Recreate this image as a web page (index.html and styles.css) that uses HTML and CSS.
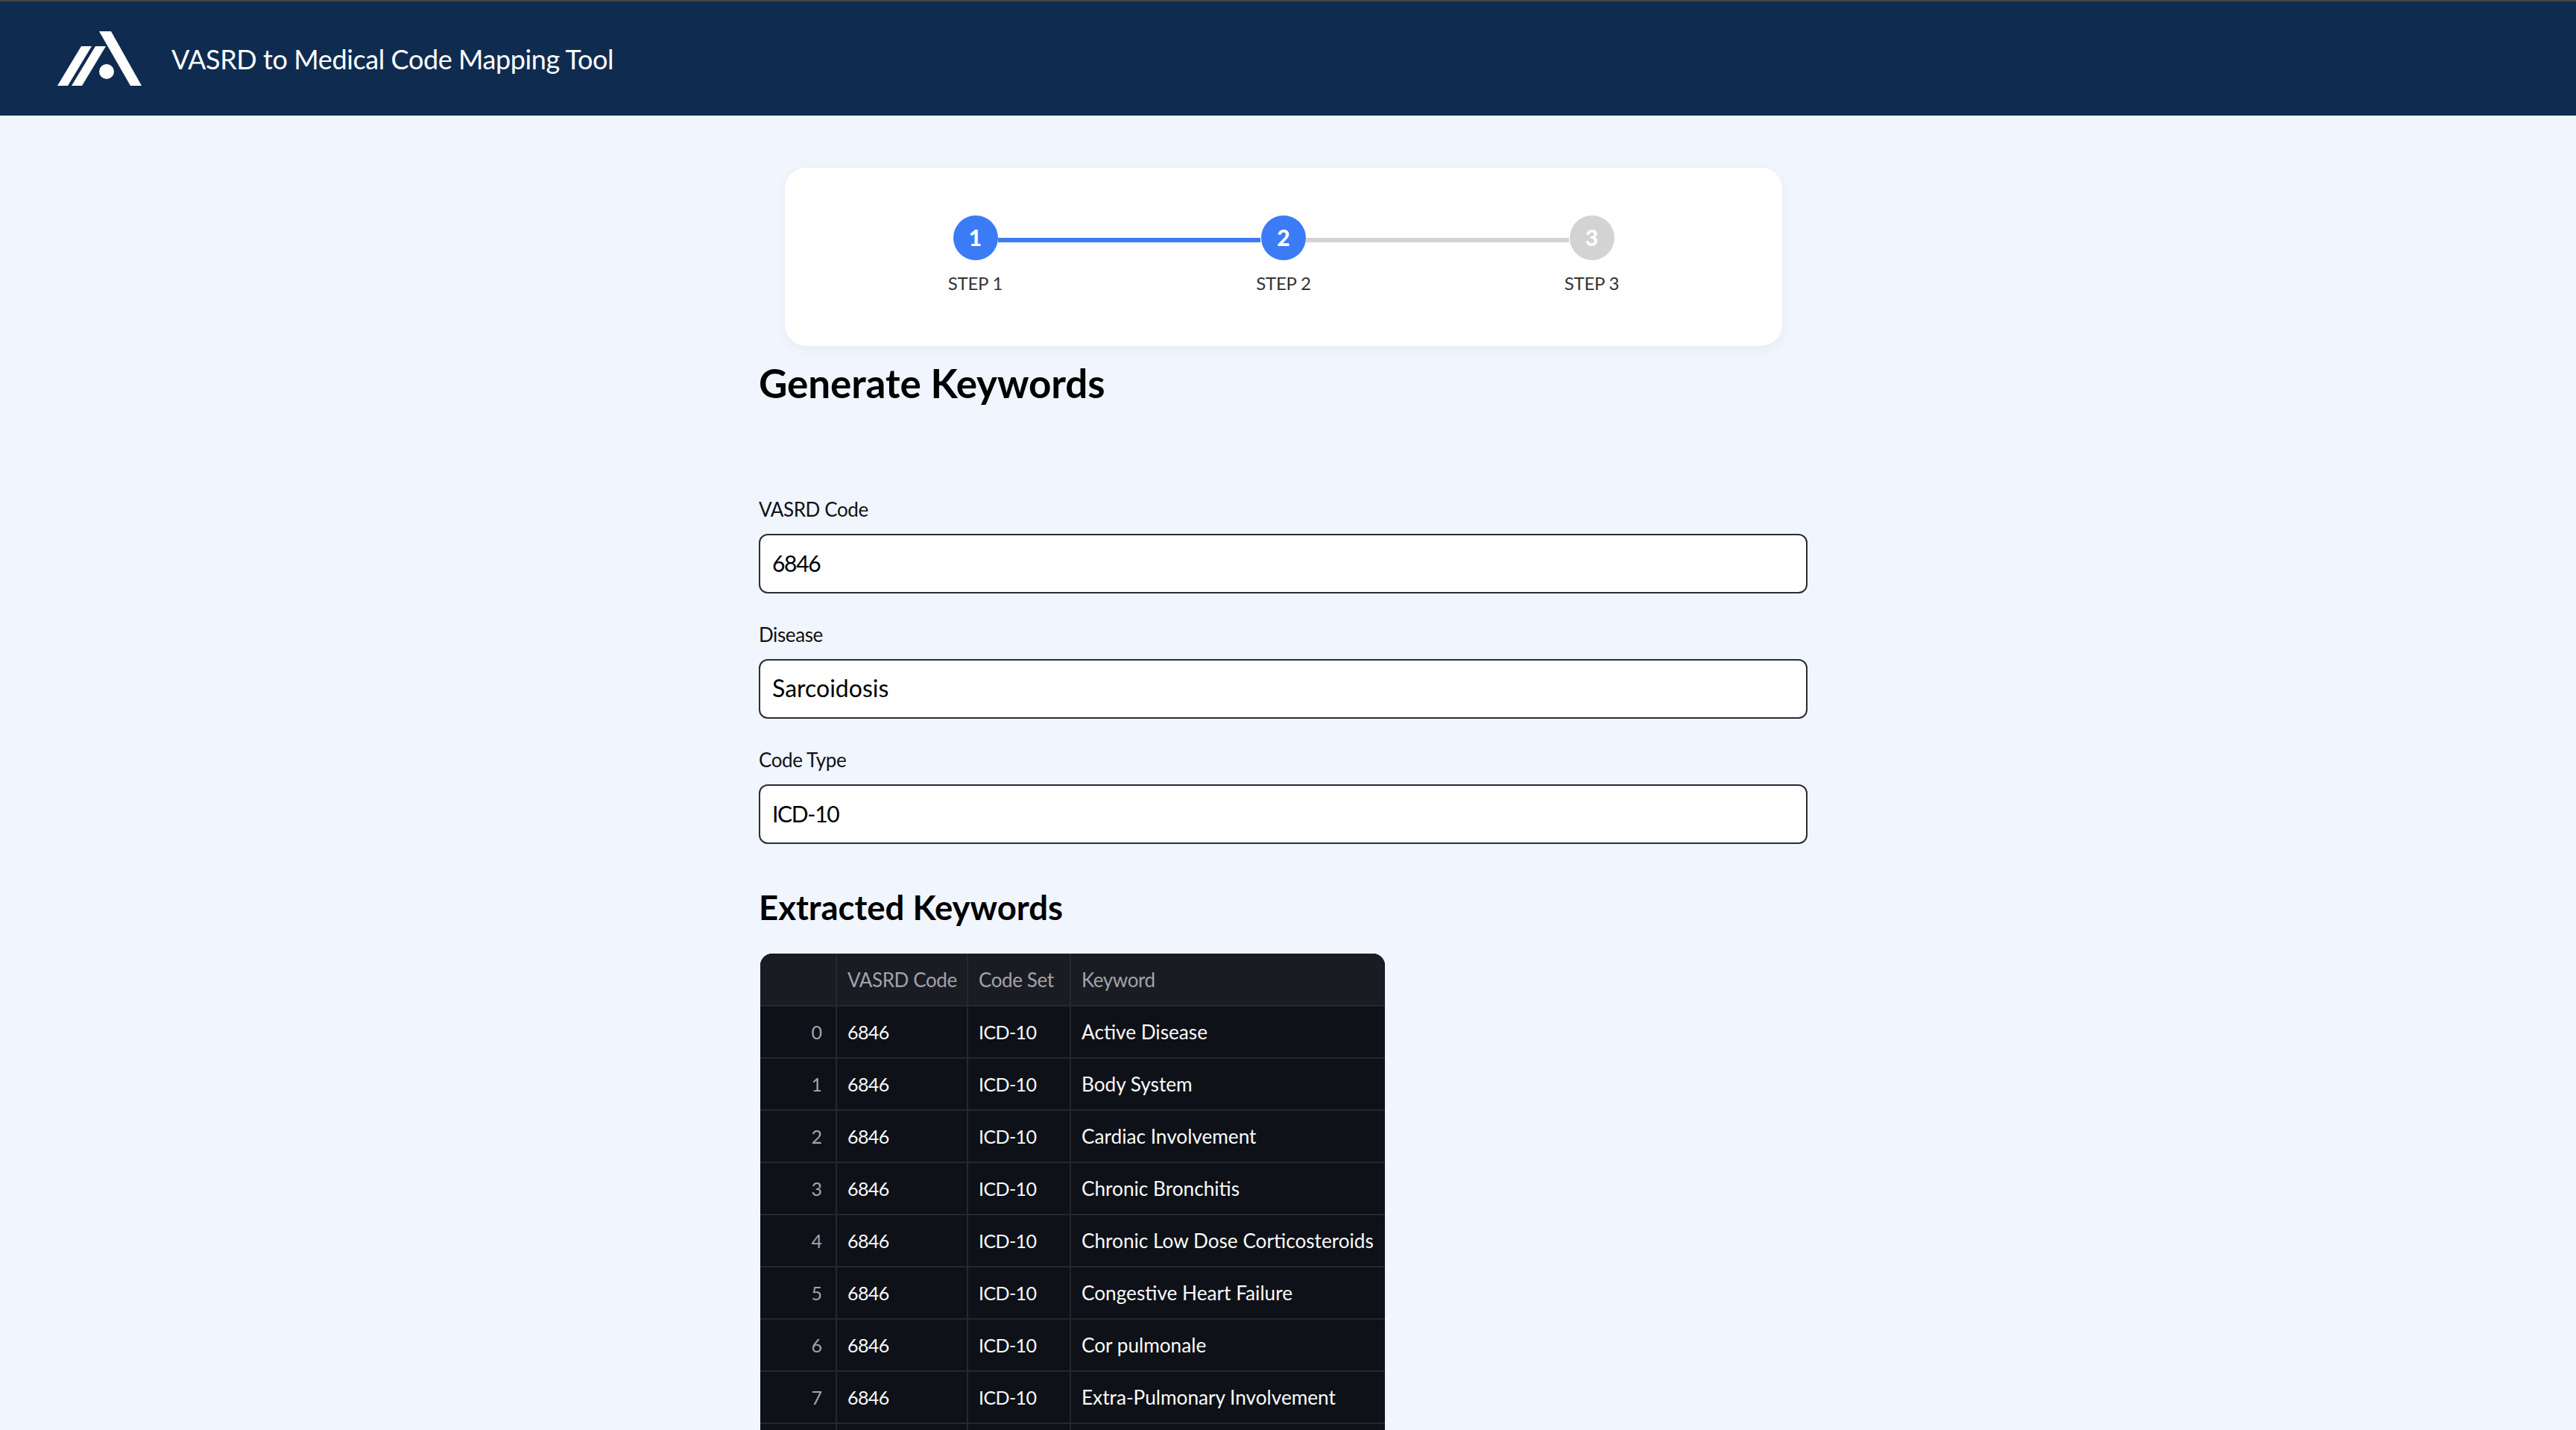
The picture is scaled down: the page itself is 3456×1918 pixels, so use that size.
FILE: index.html
```html
<!DOCTYPE html>
<html>
<head>
  <title>VASRD to Medical Code Mapping Tool</title>
  <link rel="stylesheet" href="styles.css">
</head>
<body>

<header class="topbar">
  <svg class="logo" viewBox="0 0 113 73" width="113" height="73">
    <polygon points="56,0 72,0 113,73 98,73" fill="#fff"/>
    <polygon points="32,20 46,20 14,73 0,73" fill="#fff"/>
    <polygon points="51,20 65,20 33,73 19,73" fill="#fff"/>
    <circle cx="66" cy="54" r="10" fill="#fff"/>
  </svg>
  <span class="topbar-title">VASRD to Medical Code Mapping Tool</span>
</header>

<main class="content">
  <div class="stepper-card">
    <div class="stepper">
      <div class="step">
        <div class="step-dot active">1</div>
        <div class="step-label">STEP 1</div>
      </div>
      <div class="step-line active"></div>
      <div class="step">
        <div class="step-dot active">2</div>
        <div class="step-label">STEP 2</div>
      </div>
      <div class="step-line"></div>
      <div class="step">
        <div class="step-dot">3</div>
        <div class="step-label">STEP 3</div>
      </div>
    </div>
  </div>

  <h1>Generate Keywords</h1>

  <div class="fields">
    <div class="field">
      <label for="code">VASRD Code</label>
      <input type="text" class="num" id="code" value="6846" />
    </div>
    <div class="field">
      <label for="disease">Disease</label>
      <input type="text" id="disease" value="Sarcoidosis" />
    </div>
    <div class="field">
      <label for="type">Code Type</label>
      <input type="text" class="num" id="type" value="ICD-10" />
    </div>
  </div>

  <h2>Extracted Keywords</h2>

  <div class="table-wrap">
    <table class="grid">
      <thead>
        <tr><th class="idx"></th><th>VASRD Code</th><th>Code Set</th><th>Keyword</th></tr>
      </thead>
      <tbody>
        <tr><td class="idx">0</td><td class="num">6846</td><td class="num">ICD-10</td><td>Active Disease</td></tr>
        <tr><td class="idx">1</td><td class="num">6846</td><td class="num">ICD-10</td><td>Body System</td></tr>
        <tr><td class="idx">2</td><td class="num">6846</td><td class="num">ICD-10</td><td>Cardiac Involvement</td></tr>
        <tr><td class="idx">3</td><td class="num">6846</td><td class="num">ICD-10</td><td>Chronic Bronchitis</td></tr>
        <tr><td class="idx">4</td><td class="num">6846</td><td class="num">ICD-10</td><td>Chronic Low Dose Corticosteroids</td></tr>
        <tr><td class="idx">5</td><td class="num">6846</td><td class="num">ICD-10</td><td>Congestive Heart Failure</td></tr>
        <tr><td class="idx">6</td><td class="num">6846</td><td class="num">ICD-10</td><td>Cor pulmonale</td></tr>
        <tr><td class="idx">7</td><td class="num">6846</td><td class="num">ICD-10</td><td>Extra-Pulmonary Involvement</td></tr>
        <tr><td class="idx"></td><td></td><td></td><td></td></tr>
      </tbody>
    </table>
  </div>
</main>

</body>
</html>
```

FILE: styles.css
```css
html, body {
  height: 100%;
  margin: 0;
  overflow: hidden;
}

body {
  font-family: 'Lato', 'Noto Sans', sans-serif;
  background: #f0f5fe;
  color: #000;
}

.topbar {
  display: flex;
  align-items: center;
  gap: 40px;
  height: 155px;
  box-sizing: border-box;
  padding-left: 77px;
  border-top: 2px solid #444;
  background: #0f2c50;
  color: #fff;
}

.topbar-title {
  font-size: 36px;
  letter-spacing: -0.4px;
}

.content {
  width: 1407px;
  margin-left: 1018px;
}

.stepper-card {
  box-sizing: border-box;
  width: 1338px;
  height: 239px;
  margin: 70px 0 0 35px;
  padding-top: 64px;
  background: #fff;
  border-radius: 28px;
  box-shadow: 0 4px 16px rgba(0,0,0,0.05);
}

.stepper {
  display: flex;
  width: 887px;
  margin: 0 auto;
}

.step {
  display: flex;
  flex-direction: column;
  align-items: center;
  width: 60px;
}

.step-dot {
  width: 60px;
  height: 60px;
  border-radius: 50%;
  background: #d3d3d3;
  color: #fff;
  font-size: 30px;
  font-weight: 900;
  line-height: 58px;
  text-align: center;
}

.step-dot.active {
  background: #3b7bf6;
}

.step-label {
  margin-top: 16px;
  font-size: 24px;
  letter-spacing: -0.2px;
  line-height: 30px;
  color: #333;
  white-space: nowrap;
}

.step-line {
  flex: 1;
  height: 6px;
  margin: 30px 1px 0 0;
  background: #d3d3d3;
}

.step-line.active {
  background: #3b7bf6;
}

h1 {
  margin: 15px 0 0;
  font-size: 53px;
  font-weight: 700;
  letter-spacing: -0.1px;
  line-height: 70px;
}

.fields {
  margin-top: 116px;
}

.field {
  margin-bottom: 37px;
}

label {
  display: block;
  font-size: 26px;
  letter-spacing: -0.4px;
  line-height: 36px;
  margin-bottom: 15px;
  color: #111;
}

input {
  display: block;
  width: 100%;
  height: 80px;
  box-sizing: border-box;
  padding: 0 16px 3px;
  border: 2px solid #2a2c35;
  border-radius: 12px;
  background: #fff;
  color: #000;
  font-family: inherit;
  font-size: 32px;
}

input.num {
  font-size: 30px;
  letter-spacing: -1.3px;
}

h2 {
  margin: 53px 0 0;
  font-size: 45.5px;
  font-weight: 700;
  line-height: 64px;
}

.table-wrap {
  width: 838px;
  margin: 30px 0 0 2px;
  border-radius: 16px 16px 0 0;
  overflow: hidden;
  background: #0e1117;
}

.grid {
  width: 100%;
  border-collapse: collapse;
  table-layout: fixed;
  font-size: 26.2px;
  color: #fafafa;
}

.grid th, .grid td {
  height: 70px;
  box-sizing: border-box;
  padding: 0 14px 0 14px;
  border-right: 2px solid #262730;
  border-bottom: 2px solid #262730;
  text-align: left;
  white-space: nowrap;
  font-weight: 400;
}

.grid th:last-child, .grid td:last-child {
  border-right: none;
}

.grid th {
  background: #1a1c24;
  color: #a3a3a8;
  font-size: 26px;
  letter-spacing: -0.4px;
}

.grid th:nth-child(1) { width: 102px; }
.grid th:nth-child(2) { width: 176px; }
.grid th:nth-child(3) { width: 138px; }

.grid .num {
  font-size: 25px;
  letter-spacing: -0.6px;
}

.grid .idx {
  padding-right: 18px;
  text-align: right;
  font-size: 25px;
  color: #a3a3a8;
}
```
